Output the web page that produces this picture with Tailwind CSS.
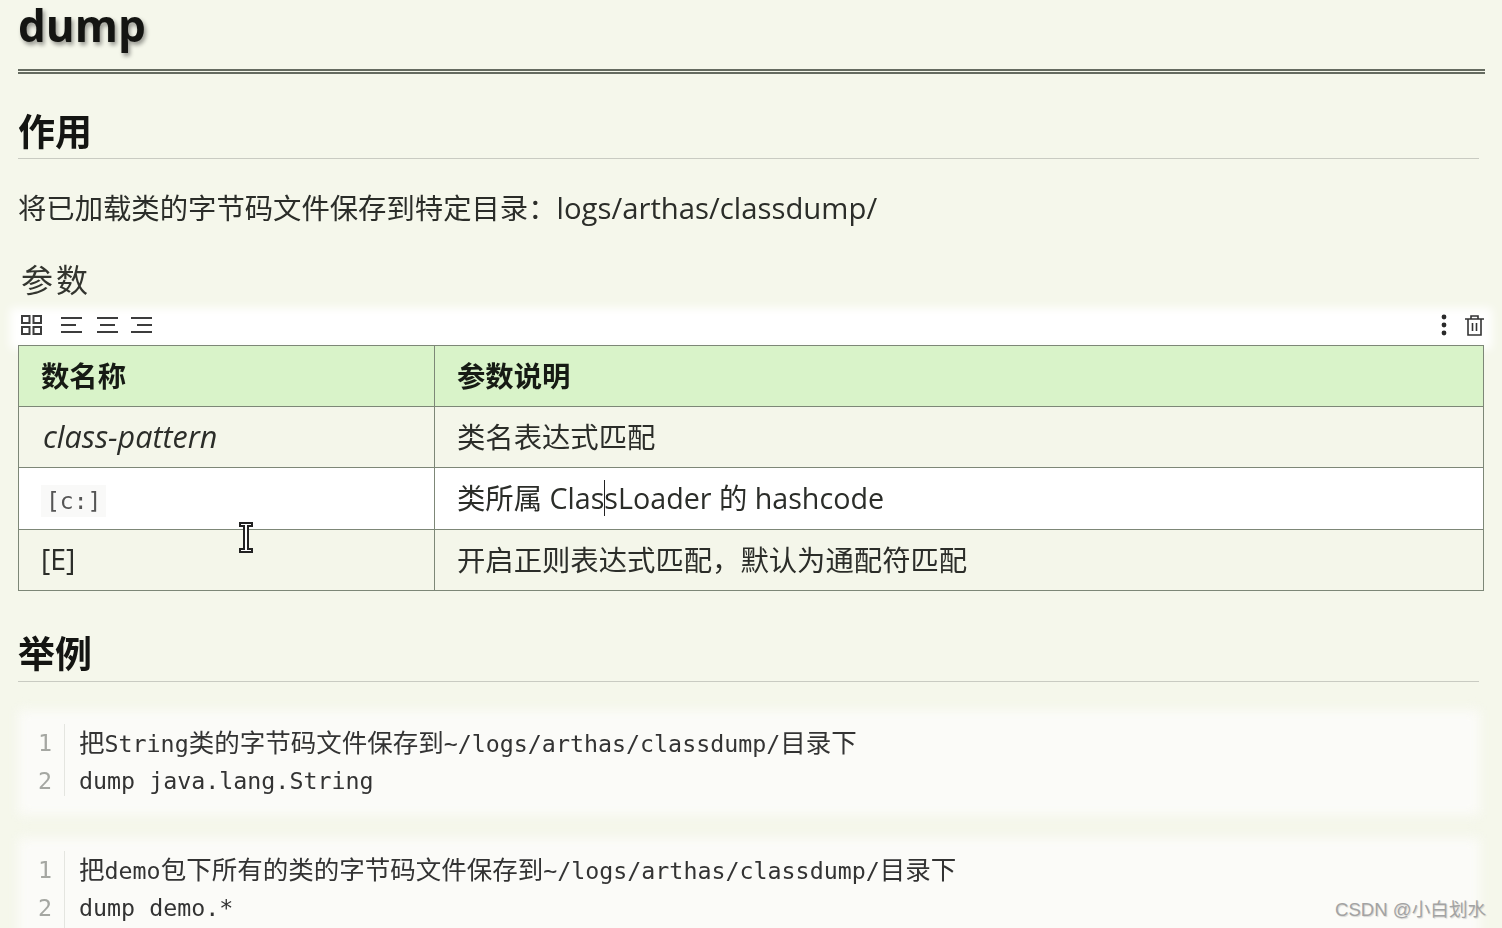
<!DOCTYPE html>
<html lang="zh-CN">
<head>
    <meta charset="UTF-8">
    <title>dump</title>
    <script src="https://cdn.jsdelivr.net/npm/@tailwindcss/browser@4"></script>
</head>
<body class="bg-[#f5f7eb] text-[#2b2d29] font-['Open_Sans','Noto_Sans_CJK_SC',sans-serif] h-[928px] w-[1502px] overflow-hidden relative">
    <main class="pl-[18px] blur-[0.5px]">
        <!-- Title -->
        <h1 class="h-[74px] w-[1467px] border-b-[5px] border-double border-[#656b60] pb-[20px] flex items-center text-[44px] leading-[46px] font-bold text-[#141512] [text-shadow:2px_3px_4px_rgba(0,0,0,0.4)]">dump</h1>

        <h2 class="h-[85px] w-[1461px] border-b border-[#c9cbc2] flex items-end pb-[1px] text-[37px] leading-[50px] font-bold text-[#141512]">作用</h2>
        <p class="mt-[29px] h-[40px] text-[28.350px] leading-[40px] whitespace-nowrap">将已加载类的字节码文件保存到特定目录：<span class="text-[29.300px]">logs/arthas/classdump/</span></p>

        <div class="mt-[32px] h-[40px] pl-[3px] text-[32px] leading-[40px] tracking-[3px] text-[#33352f]">参数</div>

        <!-- Table toolbar -->
        <div class="mt-[8px] -ml-[8px] w-[1482px] h-[37px] pl-[11px] pr-[8px] pb-[3px] relative flex items-center">
            <div class="absolute -z-10 inset-x-0 top-0 -bottom-[4px] bg-white blur-[5px]"></div>
            <svg class="w-[21px] h-[20px]" viewBox="0 0 21 20" fill="none" stroke="#3c3c3c" stroke-width="2"><rect x="1" y="1" width="7.500" height="7"/><rect x="12.500" y="1" width="7.500" height="7"/><rect x="1" y="12" width="7.500" height="7"/><rect x="12.500" y="12" width="7.500" height="7"/></svg>
            <svg class="ml-[19px] w-[21px] h-[18px]" viewBox="0 0 21 18" fill="none" stroke="#3c3c3c" stroke-width="2"><path d="M0 2h21M0 9h15M0 16h21"/></svg>
            <svg class="ml-[15px] w-[21px] h-[18px]" viewBox="0 0 21 18" fill="none" stroke="#3c3c3c" stroke-width="2"><path d="M0 2h21M3 9h15M0 16h21"/></svg>
            <svg class="ml-[13px] w-[21px] h-[18px]" viewBox="0 0 21 18" fill="none" stroke="#3c3c3c" stroke-width="2"><path d="M0 2h21M6 9h15M0 16h21"/></svg>
            <svg class="ml-auto w-[6px] h-[22px]" viewBox="0 0 6 22" fill="#2a2a2a"><circle cx="3" cy="3" r="2.4"/><circle cx="3" cy="11" r="2.4"/><circle cx="3" cy="19" r="2.4"/></svg>
            <svg class="ml-[18px] w-[19px] h-[21px]" viewBox="0 0 19 21" fill="none" stroke="#333" stroke-width="1.6"><path d="M0 4h19M6 4V1h7v3M3 4v16h13V4M7.500 8v8M11.500 8v8"/></svg>
        </div>

        <!-- Params table -->
        <table class="w-[1466px] table-fixed border-collapse text-[28.350px]">
            <colgroup><col class="w-[416px]"><col></colgroup>
            <thead>
                <tr class="h-[61px] bg-[#d9f3c9] text-left text-[#161a14]">
                    <th class="border border-[#7d8777] pl-[22px] font-bold">数名称</th>
                    <th class="border border-[#7d8777] pl-[22px] font-bold">参数说明</th>
                </tr>
            </thead>
            <tbody>
                <tr class="h-[61px] bg-[#f4f6ea]">
                    <td class="border border-[#7d8777] pl-[24px] pb-[1px] italic text-[30.500px]">class-pattern</td>
                    <td class="border border-[#7d8777] pl-[22px]">类名表达式匹配</td>
                </tr>
                <tr class="h-[62px] bg-white">
                    <td class="border border-[#7d8777] pl-[22px]"><code class="inline-block bg-[#f9f9f8] px-[5px] text-[23px] leading-[32px] text-[#555] font-['DejaVu_Sans_Mono',monospace]">[c:]</code></td>
                    <td class="border border-[#7d8777] pl-[22px] pb-[1px] relative">类所属 <span class="text-[28.700px]">ClassLoader</span> 的 <span class="text-[28.700px]">hashcode</span><span class="absolute left-[169px] top-[12px] w-px h-[36px] bg-[#222]"></span></td>
                </tr>
                <tr class="h-[61px] bg-[#f4f6ea]">
                    <td class="border border-[#7d8777] pl-[22px] pb-[2px]">[E]</td>
                    <td class="border border-[#7d8777] pl-[22px]">开启正则表达式匹配，默认为通配符匹配</td>
                </tr>
            </tbody>
        </table>

        <h2 class="h-[91px] w-[1461px] border-b border-[#c9cbc2] flex items-end pb-[2px] text-[37px] leading-[50px] font-bold text-[#141512]">举例</h2>

        <!-- Code blocks -->
        <div class="mt-[28px] w-[1462px] h-[105px] pt-[14px] relative flex text-[23.300px] leading-[38px] text-[#333] font-['DejaVu_Sans_Mono','Noto_Sans_CJK_SC',monospace]">
            <div class="absolute -z-10 inset-0 bg-[#fbfbf8] blur-[6px]"></div>
            <div class="w-[47px] h-[72px] pr-[12px] border-r border-[#e4e5e0] text-right text-[#a5a7a2]"><div>1</div><div>2</div></div>
            <div class="pl-[14px] whitespace-nowrap">
                <div class="h-[38px]"><span class="text-[25.500px]">把</span>String<span class="text-[25.500px]">类的字节码文件保存到</span>~/logs/arthas/classdump/<span class="text-[25.500px]">目录下</span></div>
                <div class="h-[38px]">dump java.lang.String</div>
            </div>
        </div>
        <div class="mt-[23px] w-[1462px] h-[130px] pt-[13px] relative flex text-[23.300px] leading-[38px] text-[#333] font-['DejaVu_Sans_Mono','Noto_Sans_CJK_SC',monospace]">
            <div class="absolute -z-10 inset-0 bg-[#fbfbf8] blur-[6px]"></div>
            <div class="w-[47px] h-[80px] pr-[12px] border-r border-[#e4e5e0] text-right text-[#a5a7a2]"><div>1</div><div>2</div></div>
            <div class="pl-[14px] whitespace-nowrap">
                <div class="h-[38px]"><span class="text-[25.500px]">把</span>demo<span class="text-[25.500px]">包下所有的类的字节码文件保存到</span>~/logs/arthas/classdump/<span class="text-[25.500px]">目录下</span></div>
                <div class="h-[38px]">dump demo.*</div>
            </div>
        </div>
    </main>

    <!-- Mouse cursor over the table -->
    <svg class="absolute left-[238px] top-[521px] w-[16px] h-[33px]" viewBox="0 0 16 33" fill="#fff" stroke="#222" stroke-width="2"><path d="M2 2h12v3h-4v23h4v3H2v-3h4V5H2z"/></svg>
    <!-- Watermark -->
    <div class="absolute left-[1335px] top-[897px] text-[18.600px] leading-[26px] text-[#a3a3a3] whitespace-nowrap font-['Liberation_Sans','Noto_Sans_CJK_SC',sans-serif] [text-shadow:1px_1px_1px_rgba(0,0,0,0.15)]">CSDN @小白划水</div>
</body>
</html>
